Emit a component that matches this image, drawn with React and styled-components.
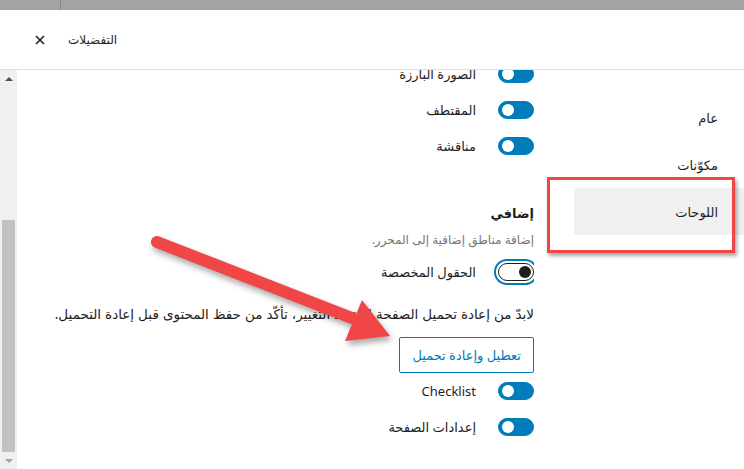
import styled, { createGlobalStyle } from "styled-components";

const GlobalStyle = createGlobalStyle`
  html, body {
    margin: 0;
    padding: 0;
  }
  body {
    font-family: "Noto Sans", "DejaVu Sans", sans-serif;
    font-size: 13px;
    color: #1e1e1e;
  }
`;

const Page = styled.div`
  position: relative;
  width: 744px;
  height: 469px;
  overflow: hidden;
  display: flex;
  flex-direction: column;
  background: #a3a3a3;
`;

const Backdrop = styled.div`
  height: 10px;
  flex-shrink: 0;
  display: flex;
  background: #a3a3a3;
`;

const BackdropCell = styled.div`
  width: 60px;
  border-right: 1px solid #8a8a8a;
`;

const Modal = styled.div`
  flex: 1;
  display: flex;
  flex-direction: column;
  background: #fff;
  min-height: 0;
`;

const Header = styled.div`
  height: 59px;
  flex-shrink: 0;
  display: flex;
  align-items: center;
  gap: 23px;
  padding-left: 35px;
  border-bottom: 1px solid #e0e0e0;
`;

const CloseButton = styled.button`
  border: 0;
  background: none;
  padding: 0;
  width: 10px;
  height: 10px;
  display: flex;
  align-items: center;
  justify-content: center;
  cursor: pointer;
`;

const Title = styled.h1`
  margin: 0;
  font-size: 12px;
  font-weight: 400;
  line-height: 18px;
`;

const Body = styled.div`
  flex: 1;
  min-height: 0;
  display: flex;
  direction: rtl;
`;

const Nav = styled.nav`
  position: relative;
  width: 210px;
  flex-shrink: 0;
  padding-top: 24px;
  display: flex;
  flex-direction: column;
`;

const NavItem = styled.div`
  height: 47px;
  margin-left: 40px;
  padding-right: 26px;
  display: flex;
  align-items: center;
  border-radius: 2px;
  background: ${(p) => (p.$active ? "#f0f0f0" : "transparent")};
  color: #1e1e1e;
`;

const Highlight = styled.div`
  position: absolute;
  left: 13px;
  top: 107px;
  width: 188px;
  height: 76px;
  box-sizing: border-box;
  border: 3px solid #f04646;
  box-shadow: 2px 3px 4px rgba(0, 0, 0, 0.35);
`;

const Content = styled.div`
  flex: 1;
  min-width: 0;
  overflow: hidden;
  display: flex;
  flex-direction: column;
  align-items: flex-start;
`;

const ToggleRow = styled.div`
  display: flex;
  align-items: center;
  gap: 22px;
  height: 18px;
  margin-top: ${(p) => p.$mt ?? 18}px;
`;

const Track = styled.span`
  position: relative;
  box-sizing: border-box;
  width: 36px;
  height: 18px;
  border-radius: 9px;
  flex-shrink: 0;
  background: ${(p) => (p.$on ? "#007cba" : "#fff")};
  border: 1px solid ${(p) => (p.$on ? "#007cba" : "#1e1e1e")};
  box-shadow: ${(p) =>
    p.$focus ? "0 0 0 2px #fff, 0 0 0 4px #007cba" : "none"};
`;

const Knob = styled.span`
  position: absolute;
  top: 2px;
  width: 12px;
  height: 12px;
  border-radius: 50%;
  background: ${(p) => (p.$on ? "#fff" : "#1e1e1e")};
  ${(p) => (p.$on ? "left: 3px;" : "right: 2px;")}
`;

const Label = styled.span`
  line-height: 18px;
  color: #1e1e1e;
`;

const SectionTitle = styled.h2`
  margin: 49px 0 0;
  font-size: 13px;
  font-weight: 700;
  line-height: 18px;
`;

const Description = styled.p`
  margin: 9px 0 0;
  line-height: 18px;
  font-size: 12px;
  color: #757575;
`;

const Notice = styled.p`
  margin: 24px 0 0;
  line-height: 18px;
  font-size: 13.5px;
  word-spacing: 0.5px;
  white-space: nowrap;
`;

const OutlineButton = styled.button`
  margin-top: 14px;
  height: 36px;
  padding: 0 12px;
  box-sizing: border-box;
  border: 1px solid #007cba;
  border-radius: 2px;
  background: #fff;
  color: #007cba;
  font-family: inherit;
  font-size: 13px;
  direction: rtl;
  cursor: pointer;
`;

const Scrollbar = styled.div`
  width: 17px;
  flex-shrink: 0;
  display: flex;
  flex-direction: column;
  align-items: center;
  background: #f0f0f0;
`;

const ArrowCell = styled.div`
  height: 17px;
  flex-shrink: 0;
  display: flex;
  align-items: center;
  justify-content: center;
`;

const Thumb = styled.div`
  width: 13px;
  height: 232px;
  margin-top: auto;
  background: #c1c1c1;
`;

const Annotation = styled.svg`
  position: absolute;
  left: 0;
  top: 0;
  pointer-events: none;
  filter: drop-shadow(2px 4px 3px rgba(0, 0, 0, 0.35));
`;

const Toggle = ({ label, on = true, focus, mt }) => (
  <ToggleRow $mt={mt}>
    <Track $on={on} $focus={focus}>
      <Knob $on={on} />
    </Track>
    <Label>{label}</Label>
  </ToggleRow>
);

const App = () => {
  return (
    <>
      <GlobalStyle />
      <Page>
        <Backdrop>
          <BackdropCell />
        </Backdrop>
        <Modal>
          <Header>
            <CloseButton aria-label="إغلاق">
              <svg width="10" height="10" viewBox="0 0 10 10">
                <path
                  d="M1 1L9 9M9 1L1 9"
                  stroke="#1e1e1e"
                  strokeWidth="1.6"
                />
              </svg>
            </CloseButton>
            <Title>التفضيلات</Title>
          </Header>
          <Body>
            <Nav>
              <NavItem>عام</NavItem>
              <NavItem>مكوّنات</NavItem>
              <NavItem $active>اللوحات</NavItem>
              <Highlight />
            </Nav>
            <Content>
              <Toggle label="الصورة البارزة" mt={-5} />
              <Toggle label="المقتطف" />
              <Toggle label="مناقشة" />
              <SectionTitle>إضافي</SectionTitle>
              <Description>إضافة مناطق إضافية إلى المحرر.</Description>
              <Toggle label="الحقول المخصصة" on={false} focus mt={14} />
              <Notice>
                لابدّ من إعادة تحميل الصفحة لاعتماد التغيير، تأكّد من حفظ
                المحتوى قبل إعادة التحميل.
              </Notice>
              <OutlineButton>تعطيل وإعادة تحميل</OutlineButton>
              <Toggle label="Checklist" mt={9} />
              <Toggle label="إعدادات الصفحة" />
            </Content>
            <Scrollbar>
              <ArrowCell>
                <svg width="8" height="4" viewBox="0 0 8 4">
                  <path d="M0 4L4 0L8 4Z" fill="#505050" />
                </svg>
              </ArrowCell>
              <Thumb />
              <ArrowCell>
                <svg width="8" height="4" viewBox="0 0 8 4">
                  <path d="M0 0L8 0L4 4Z" fill="#a3a3a3" />
                </svg>
              </ArrowCell>
            </Scrollbar>
          </Body>
        </Modal>
        <Annotation width="744" height="469" viewBox="0 0 744 469">
          <line
            x1="157"
            y1="242"
            x2="352"
            y2="318"
            stroke="#f04646"
            strokeWidth="12"
            strokeLinecap="round"
          />
          <path d="M390 336L345 341L362 300Z" fill="#f04646" />
        </Annotation>
      </Page>
    </>
  );
};

export default App;
